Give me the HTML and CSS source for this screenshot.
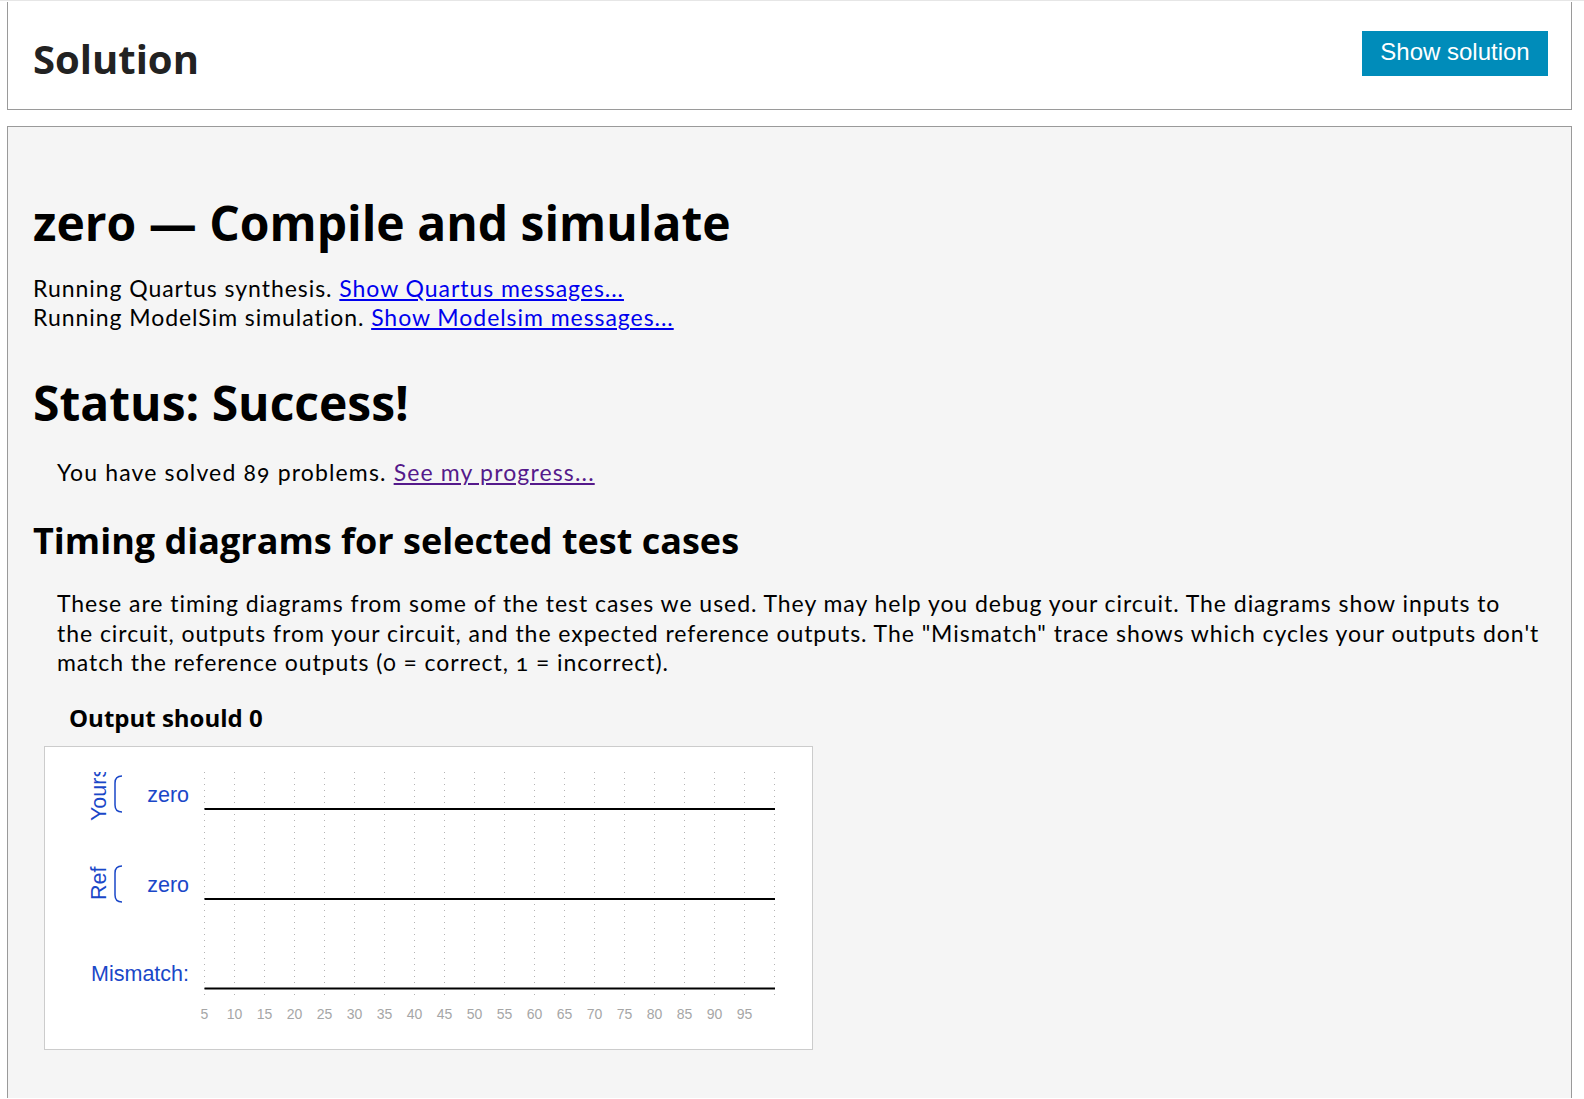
FILE: index.html
```html
<!DOCTYPE html>
<html lang="en">
<head>
<meta charset="utf-8">
<title>zero — Compile and simulate</title>
<link rel="stylesheet" href="styles.css">
</head>
<body>
<div class="topline"></div>
<div class="panel head">
  <h2 class="title">Solution</h2>
  <button class="btn" type="button">Show solution</button>
</div>
<div class="panel results">
  <h1 class="h-main">zero — Compile and simulate</h1>
  <div class="log">Running Quartus synthesis. <a href="#quartus">Show Quartus messages...</a><br>Running ModelSim simulation. <a href="#modelsim">Show Modelsim messages...</a></div>
  <h1 class="h-status">Status: Success!</h1>
  <p class="indent solved">You have solved <span class="num">89</span> problems. <a class="visited" href="#progress">See my progress...</a></p>
  <h2 class="h-timing">Timing diagrams for selected test cases</h2>
  <p class="indent desc">These are timing diagrams from some of the test cases we used. They may help you debug your circuit. The diagrams show inputs to<br>the circuit, outputs from your circuit, and the expected reference outputs. The "Mismatch" trace shows which cycles your outputs don't<br>match the reference outputs (<span class="num">0</span> = correct, <span class="num">1</span> = incorrect).</p>
  <h4 class="case">Output should 0</h4>
  <div class="wave">
    <svg width="767" height="302" viewBox="1 0 767 302" xmlns="http://www.w3.org/2000/svg">
      <defs>
        <clipPath id="lblclip"><rect x="0" y="25" width="140" height="260"/></clipPath>
      </defs>
      <path class="grid" d="M160.5 25V249M190.5 25V249M220.5 25V249M250.5 25V249M280.5 25V249M310.5 25V249M340.5 25V249M370.5 25V249M400.5 25V249M430.5 25V249M460.5 25V249M490.5 25V249M520.5 25V249M550.5 25V249M580.5 25V249M610.5 25V249M640.5 25V249M670.5 25V249M700.5 25V249M730.5 25V249"/>
      <path class="sig" d="M160.5 62H731M160.5 152H731M160.5 241.5H731"/>
      <g clip-path="url(#lblclip)">
        <text class="lbl" transform="translate(62 74) rotate(-90)">Yours</text>
        <text class="lbl" transform="translate(62 153) rotate(-90)">Ref</text>
      </g>
      <path class="brace" d="M78 29Q71 29 71 36V58Q71 65 78 65M78 119Q71 119 71 126V148Q71 155 78 155"/>
      <text class="lbl" x="145" y="55" text-anchor="end">zero</text>
      <text class="lbl" x="145" y="145" text-anchor="end">zero</text>
      <text class="lbl" x="145" y="234" text-anchor="end">Mismatch:</text>
      <g class="ticks" text-anchor="middle">
        <text x="160.5" y="272">5</text>
        <text x="190.5" y="272">10</text>
        <text x="220.5" y="272">15</text>
        <text x="250.5" y="272">20</text>
        <text x="280.5" y="272">25</text>
        <text x="310.5" y="272">30</text>
        <text x="340.5" y="272">35</text>
        <text x="370.5" y="272">40</text>
        <text x="400.5" y="272">45</text>
        <text x="430.5" y="272">50</text>
        <text x="460.5" y="272">55</text>
        <text x="490.5" y="272">60</text>
        <text x="520.5" y="272">65</text>
        <text x="550.5" y="272">70</text>
        <text x="580.5" y="272">75</text>
        <text x="610.5" y="272">80</text>
        <text x="640.5" y="272">85</text>
        <text x="670.5" y="272">90</text>
        <text x="700.5" y="272">95</text>
      </g>
    </svg>
  </div>
</div>
</body>
</html>
```

FILE: styles.css
```css
html, body {
  margin: 0;
  padding: 0;
  background: #ffffff;
}

body {
  font-family: Lato, "Open Sans", sans-serif;
  color: #000000;
}

.topline {
  height: 1px;
  background: #e6e6e6;
  margin-bottom: 1px;
}

.panel {
  margin: 0 12px 0 7px;
  border: 1px solid #9a9a9a;
}

.head {
  border-top: none;
  height: 107px;
  box-sizing: content-box;
  display: flex;
  justify-content: space-between;
  align-items: flex-start;
  padding: 0 23px 0 25px;
  background: #ffffff;
}

.title {
  font-family: "Open Sans", sans-serif;
  font-weight: 700;
  font-size: 40px;
  line-height: 48px;
  color: #222222;
  margin: 33px 0 0;
}

.btn {
  margin-top: 29px;
  width: 186px;
  height: 45px;
  padding: 0 0 3px;
  border: none;
  background: #008cba;
  color: #ffffff;
  font-family: "Liberation Sans", Arial, sans-serif;
  font-size: 24px;
  cursor: pointer;
}

.results {
  margin-top: 16px;
  border-bottom: none;
  background: #f5f5f5;
  padding: 0 25px 48px 25px;
}

.h-main,
.h-status,
.h-timing,
.case {
  font-family: "Open Sans", sans-serif;
  font-weight: 700;
  color: #000000;
  margin: 0;
}

.h-main {
  font-size: 48px;
  line-height: 52px;
  padding-top: 70px;
}

.log {
  font-size: 23px;
  letter-spacing: 0.95px;
  line-height: 29px;
  margin-top: 25px;
}

.h-status {
  font-size: 48px;
  line-height: 52px;
  margin-top: 45px;
}

.indent {
  margin: 0 0 0 24px;
  font-size: 23px;
  letter-spacing: 0.95px;
  line-height: 29.4px;
}

.solved {
  margin-top: 29px;
  letter-spacing: 1.15px;
}

.h-timing {
  font-size: 36px;
  line-height: 42px;
  margin-top: 33px;
}

.desc {
  margin-top: 27px;
  margin-right: -14px;
}

.num {
  font-variant-numeric: oldstyle-nums;
}

a {
  color: #0000ee;
  text-decoration: underline;
}

a.visited {
  color: #551a8b;
}

.case {
  font-size: 24px;
  line-height: 30px;
  margin: 25px 0 0 36px;
}

.wave {
  width: 767px;
  height: 302px;
  margin: 13px 0 0 11px;
  border: 1px solid #cccccc;
  background: #ffffff;
}

.wave svg {
  display: block;
}

.grid {
  stroke: #b4b4b4;
  stroke-width: 1;
  stroke-dasharray: 1 5;
  fill: none;
}

.sig {
  stroke: #000000;
  stroke-width: 2;
  fill: none;
}

.brace {
  stroke: #1a47c8;
  stroke-width: 1.5;
  fill: none;
}

.lbl {
  font-family: "Liberation Sans", Arial, sans-serif;
  font-size: 21.5px;
  fill: #1a47c8;
}

.ticks text {
  font-family: "Liberation Sans", Arial, sans-serif;
  font-size: 14px;
  fill: #a6a6a6;
}
```
